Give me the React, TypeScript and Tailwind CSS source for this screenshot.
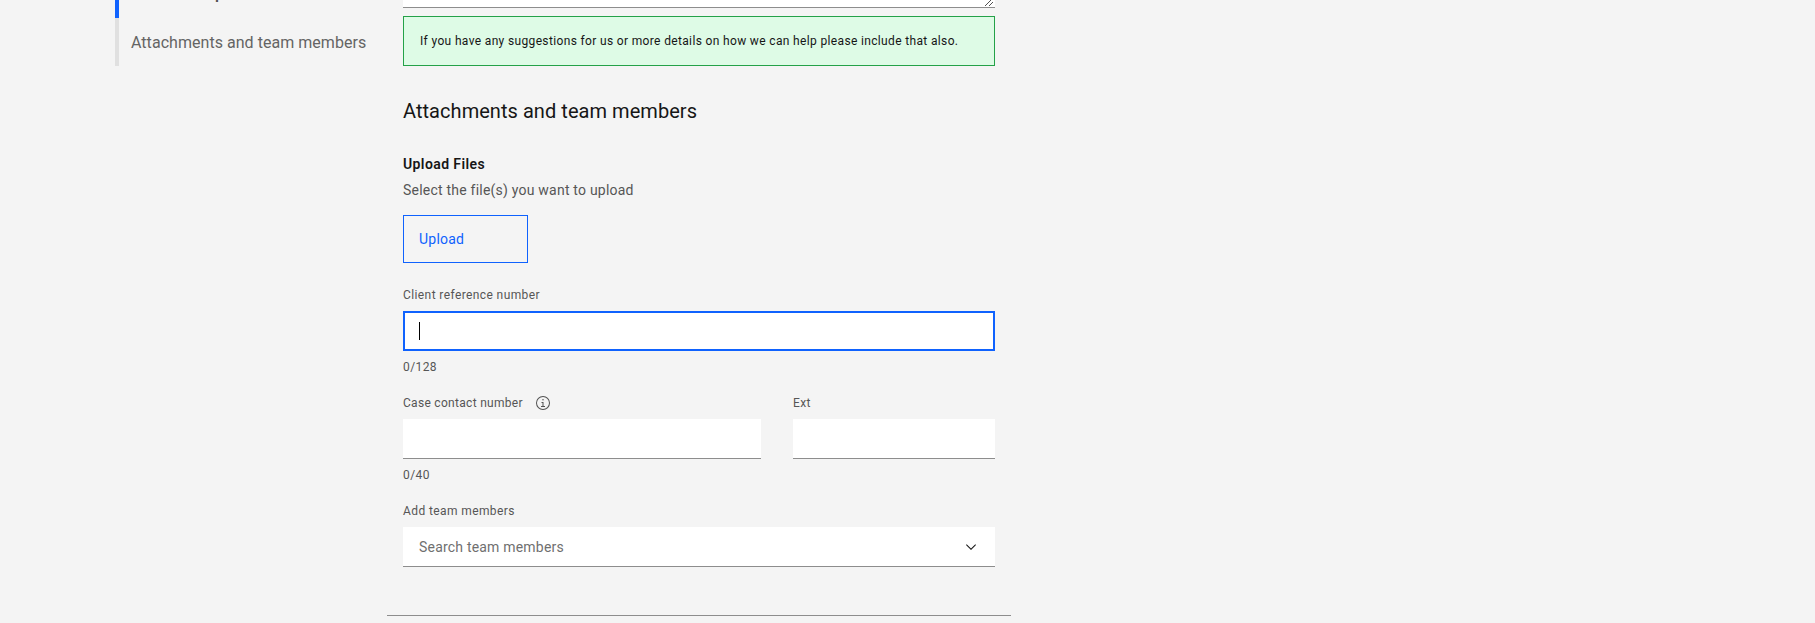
import type { ReactNode } from "react";

function Label({ children }: { children: ReactNode }) {
  return (
    <div className="flex h-4 items-center text-xs leading-4 tracking-[0.4px] text-[#565656]">
      {children}
    </div>
  );
}

function InfoIcon() {
  return (
    <svg className="ml-3 size-4 shrink-0" viewBox="0 0 32 32" fill="#525252" aria-hidden="true">
      <path d="M17 22V14H13v2h2v6H12v2h8V22zM16 8a1.5 1.5 0 1 0 1.5 1.5A1.5 1.5 0 0 0 16 8z" />
      <path d="M16 30A14 14 0 1 1 30 16 14 14 0 0 1 16 30zM16 4A12 12 0 1 0 28 16 12 12 0 0 0 16 4z" />
    </svg>
  );
}

function ChevronDown() {
  return (
    <svg className="size-4" viewBox="0 0 16 16" fill="#161616" aria-hidden="true">
      <path d="M8 11L3 6 3.7 5.3 8 9.6 12.3 5.3 13 6z" />
    </svg>
  );
}

function ResizeGrip() {
  return (
    <svg
      className="ml-auto h-[7px] w-[9px]"
      viewBox="0 0 9 7"
      stroke="#525252"
      strokeWidth="1"
      shapeRendering="crispEdges"
      aria-hidden="true"
    >
      <path d="M0 6L6 0M4 6L8 2" />
    </svg>
  );
}

function ProgressNav() {
  return (
    <nav className="-mt-[30px] ml-[115px] w-[272px] shrink-0 text-base leading-6 whitespace-nowrap">
      <div className="flex h-12 items-center border-l-4 border-[#0f62fe] pl-3 font-semibold text-[#525252]">
        Case description
      </div>
      <div className="flex h-12 items-center border-l-4 border-[#e0e0e0] pt-0.5 pl-3 tracking-[0.04px] text-[#646464]">
        Attachments and team members
      </div>
    </nav>
  );
}

export default function App() {
  return (
    <div className="flex h-[623px] items-start overflow-hidden bg-[#f4f4f4] font-['Roboto',sans-serif] text-[#161616]">
      <ProgressNav />
      <main className="flex w-[624px] flex-col">
        <div className="flex flex-col px-4">
          <div className="flex h-2 border-b border-[#8d8d8d] bg-white pr-px">
            <ResizeGrip />
          </div>
          <div className="mt-2 flex h-[50px] items-center border border-[#24a148] bg-[#defbe6] px-4 text-xs leading-4 tracking-[0.35px] whitespace-nowrap">
            If you have any suggestions for us or more details on how we can help please include that
            also.
          </div>

          <h2 className="mt-[31px] text-xl leading-7 font-normal tracking-[0.05px]">
            Attachments and team members
          </h2>

          <h3 className="mt-[30px] text-sm leading-[18px] font-semibold tracking-[0.4px]">
            Upload Files
          </h3>
          <p className="mt-2 text-sm leading-[18px] tracking-[0.22px] text-[#565656]">
            Select the file(s) you want to upload
          </p>
          <button className="mt-4 flex h-12 w-[125px] items-center border border-[#0f62fe] px-[15px] text-sm leading-[18px] tracking-[0.22px] text-[#0f62fe]">
            Upload
          </button>

          <div className="mt-6 flex flex-col gap-2">
            <Label>Client reference number</Label>
            <div className="flex h-10 items-center border-2 border-[#0f62fe] bg-white px-3.5">
              <span className="h-[18px] w-px bg-black" />
            </div>
            <Label>0/128</Label>
          </div>

          <div className="mt-5 flex gap-8">
            <div className="flex w-[358px] flex-col gap-2">
              <Label>
                <span className="w-[120px] tracking-[0.3px] whitespace-nowrap">
                  Case contact number
                </span>
                <InfoIcon />
              </Label>
              <div className="h-10 border-b border-[#8d8d8d] bg-white" />
              <Label>0/40</Label>
            </div>
            <div className="flex flex-1 flex-col gap-2">
              <Label>Ext</Label>
              <div className="h-10 border-b border-[#8d8d8d] bg-white" />
            </div>
          </div>

          <div className="mt-5 flex flex-col gap-2">
            <Label>Add team members</Label>
            <div className="flex h-10 items-center justify-between border-b border-[#8d8d8d] bg-white px-4 text-sm leading-[18px] tracking-[0.2px] text-[#6f6f6f]">
              Search team members
              <ChevronDown />
            </div>
          </div>
        </div>
        <div className="mt-12 h-px bg-[#8d8d8d]" />
      </main>
    </div>
  );
}
